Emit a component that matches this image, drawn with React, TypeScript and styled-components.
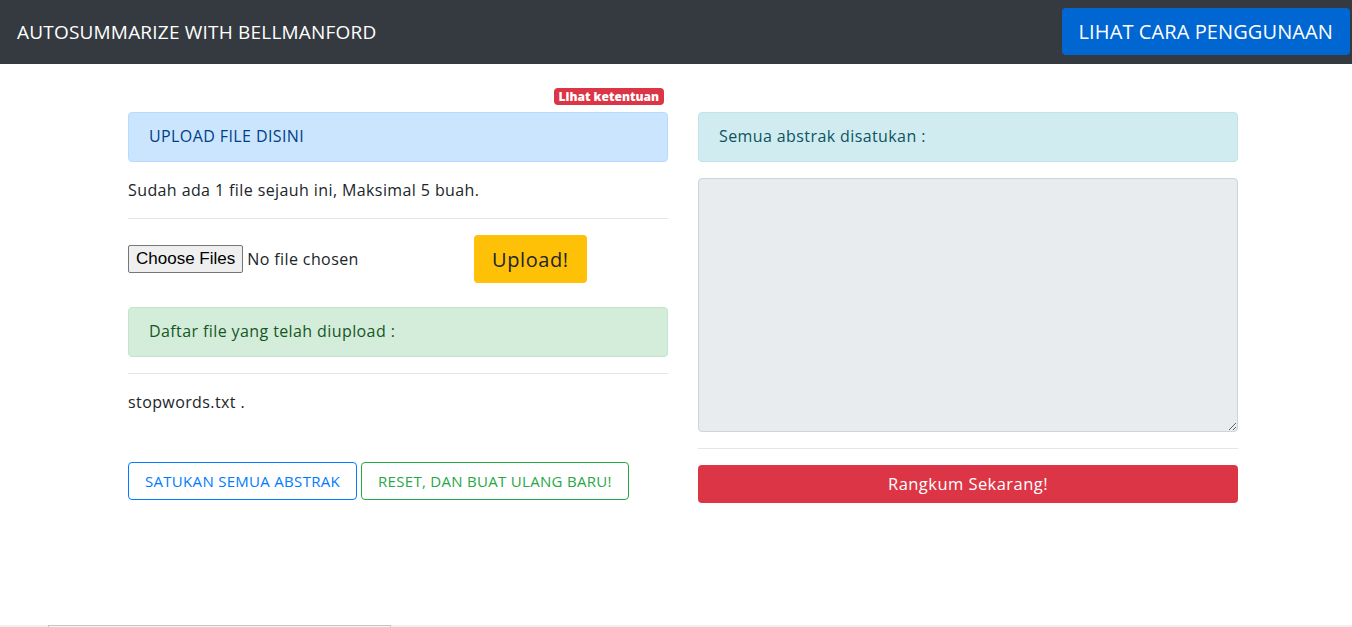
import React from "react";
import styled, { createGlobalStyle } from "styled-components";

const Global = createGlobalStyle`
  html, body { margin: 0; padding: 0; overflow: hidden; background: #fff; }
  body { font-family: "Open Sans", "Noto Sans", sans-serif; font-size: 16px; letter-spacing: 0.4px; color: #212529; line-height: 24px; }
  * { box-sizing: border-box; }
`;

const Navbar = styled.nav`
  height: 64px;
  background: #343a40;
  display: flex;
  align-items: flex-start;
  justify-content: space-between;
  padding: 0 2px 0 17px;
`;

const Brand = styled.div`
  color: #fff;
  font-size: 19px;
  font-weight: 500;
  letter-spacing: 0.2px;
  line-height: 64px;
`;

const NavButton = styled.button`
  height: 47px;
  margin-top: 8px;
  padding: 0 17px;
  background: #0066d2;
  color: #fff;
  border: none;
  border-radius: 4px;
  font-family: inherit;
  font-size: 20px;
  font-weight: 500;
  letter-spacing: 0.1px;
`;

const Container = styled.main`
  width: 1110px;
  margin-left: 128px;
  display: grid;
  grid-template-columns: 540px 540px;
  column-gap: 30px;
  align-items: start;
`;

const Column = styled.section<{ $top: number }>`
  display: flex;
  flex-direction: column;
  padding-top: ${(p) => p.$top}px;
`;

const BadgeRow = styled.div`
  display: flex;
  justify-content: flex-end;
  padding-right: 4px;
  margin-bottom: 7px;
`;

const Badge = styled.span`
  background: #dc3545;
  color: #fff;
  font-size: 12px;
  font-weight: 800;
  letter-spacing: 0;
  line-height: 17px;
  height: 17px;
  padding: 0 5px;
  border-radius: 4px;
`;

const tones = {
  primary: { bg: "#cce5ff", border: "#b8daff", fg: "#004085" },
  success: { bg: "#d4edda", border: "#c3e6cb", fg: "#155724" },
  info: { bg: "#d1ecf1", border: "#bee5eb", fg: "#0c5460" },
};

const Alert = styled.div<{ $tone: keyof typeof tones }>`
  padding: 11px 20px 13px;
  height: 50px;
  border: 1px solid ${(p) => tones[p.$tone].border};
  background: ${(p) => tones[p.$tone].bg};
  color: ${(p) => tones[p.$tone].fg};
  border-radius: 4px;
  margin-bottom: 16px;
`;

const Text = styled.p`
  margin: 0 0 16px;
`;

const Rule = styled.hr`
  margin: 0 0 16px;
  border: 0;
  border-top: 1px solid rgba(0, 0, 0, 0.1);
  height: 0;
`;

const UploadRow = styled.div`
  display: flex;
  align-items: center;
  height: 48px;
`;

const FilePicker = styled.label`
  display: flex;
  align-items: center;
  width: 346px;
  margin-top: -1px;
`;

const ChooseButton = styled.span`
  display: inline-flex;
  align-items: center;
  height: 28px;
  padding: 0 7px;
  margin-right: 4px;
  background: #efefef;
  border: 1px solid #767676;
  border-radius: 2px;
  font-family: "Liberation Sans", Arial, sans-serif;
  font-size: 17px;
  letter-spacing: 0;
  color: #000;
`;

const UploadButton = styled.button`
  height: 48px;
  padding: 0 18px;
  background: #ffc107;
  color: #212529;
  border: none;
  border-radius: 4px;
  font-family: inherit;
  font-size: 20px;
  letter-spacing: 0.6px;
`;

const Spacer = styled.div<{ $h: number }>`
  height: ${(p) => p.$h}px;
`;

const ButtonRow = styled.div`
  display: flex;
  gap: 4px;
`;

const OutlineButton = styled.button<{ $color: string }>`
  height: 38px;
  padding: 0 16px;
  background: #fff;
  color: ${(p) => p.$color};
  border: 1px solid ${(p) => p.$color};
  border-radius: 4px;
  font-family: inherit;
  font-size: 15px;
  letter-spacing: 0.3px;
`;

const TextArea = styled.textarea`
  height: 254px;
  background: #e9ecef;
  border: 1px solid #ced4da;
  border-radius: 4px;
  margin: 0 0 16px;
  font-family: inherit;
  resize: vertical;
`;

const DangerButton = styled.button`
  height: 38px;
  width: 100%;
  padding-bottom: 2px;
  background: #dc3545;
  color: #fff;
  border: none;
  border-radius: 4px;
  font-family: inherit;
  font-size: 16.5px;
  font-weight: 500;
  letter-spacing: 0.45px;
`;

const ScrollStrip = styled.div`
  position: fixed;
  left: 0;
  right: 0;
  bottom: 0;
  height: 2px;
  background: #efefef;
`;

const ScrollThumb = styled.div`
  margin-left: 48px;
  width: 343px;
  height: 2px;
  background: #f6f6f6;
  border: 1px solid #c4c4c4;
  border-bottom: none;
`;

export default function App() {
  return (
    <>
      <Global />
      <Navbar>
        <Brand>AUTOSUMMARIZE WITH BELLMANFORD</Brand>
        <NavButton>LIHAT CARA PENGGUNAAN</NavButton>
      </Navbar>
      <Container>
        <Column $top={24}>
          <BadgeRow>
            <Badge>Lihat ketentuan</Badge>
          </BadgeRow>
          <Alert $tone="primary">UPLOAD FILE DISINI</Alert>
          <Text>Sudah ada 1 file sejauh ini, Maksimal 5 buah.</Text>
          <Rule />
          <UploadRow>
            <FilePicker>
              <ChooseButton>Choose Files</ChooseButton>
              No file chosen
            </FilePicker>
            <UploadButton>Upload!</UploadButton>
          </UploadRow>
          <Spacer $h={24} />
          <Alert $tone="success">Daftar file yang telah diupload :</Alert>
          <Rule />
          <Text>stopwords.txt .</Text>
          <Spacer $h={32} />
          <ButtonRow>
            <OutlineButton $color="#007bff">SATUKAN SEMUA ABSTRAK</OutlineButton>
            <OutlineButton $color="#28a745">RESET, DAN BUAT ULANG BARU!</OutlineButton>
          </ButtonRow>
        </Column>
        <Column $top={48}>
          <Alert $tone="info">Semua abstrak disatukan :</Alert>
          <TextArea />
          <Rule />
          <DangerButton>Rangkum Sekarang!</DangerButton>
        </Column>
      </Container>
      <ScrollStrip>
        <ScrollThumb />
      </ScrollStrip>
    </>
  );
}
